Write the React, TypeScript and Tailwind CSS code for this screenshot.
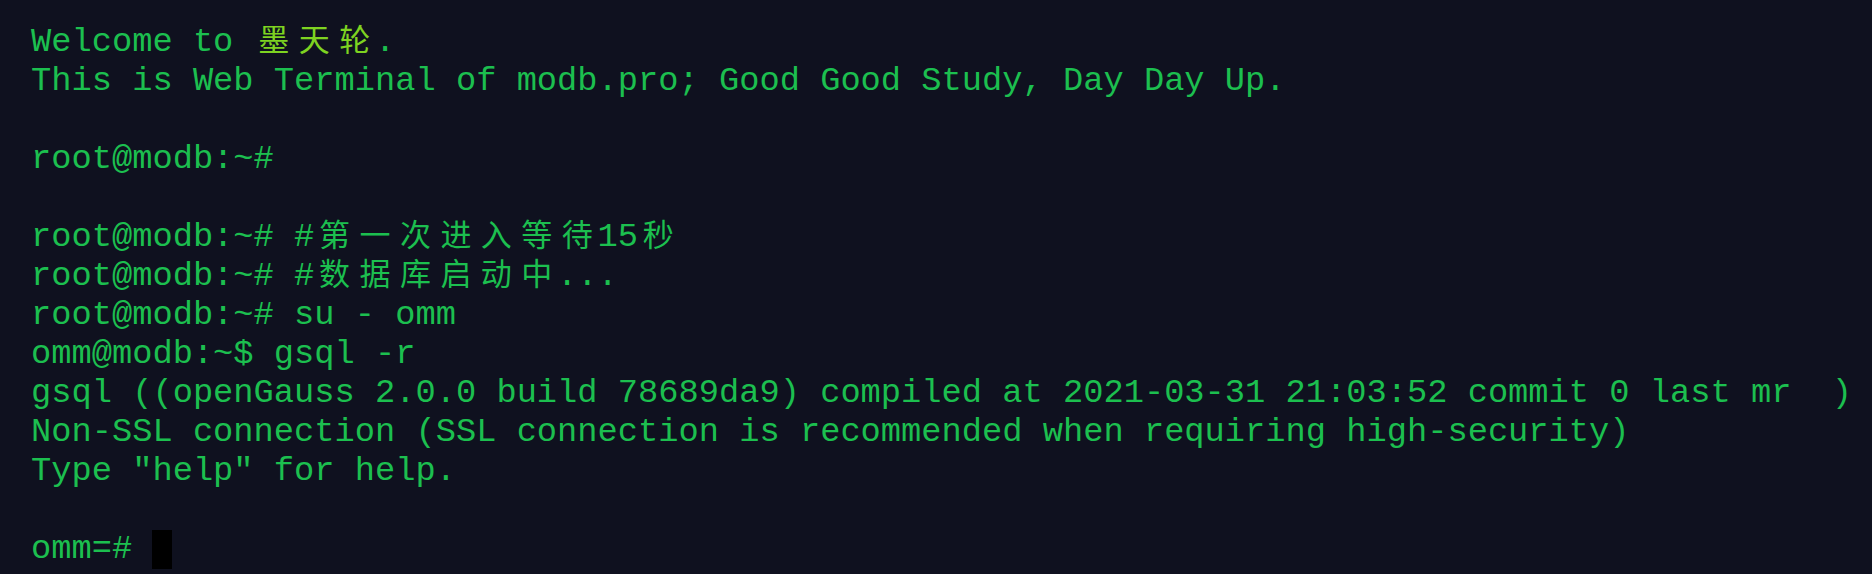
import React from "react";

type Seg = { text: string; lime?: boolean };

const rows: Seg[][] = [
  [{ text: "Welcome to " }, { text: "墨天轮", lime: true }, { text: "." }],
  [{ text: "This is Web Terminal of modb.pro; Good Good Study, Day Day Up." }],
  [],
  [{ text: "root@modb:~#" }],
  [],
  [{ text: "root@modb:~# #第一次进入等待15秒" }],
  [{ text: "root@modb:~# #数据库启动中..." }],
  [{ text: "root@modb:~# su - omm" }],
  [{ text: "omm@modb:~$ gsql -r" }],
  [
    {
      text: "gsql ((openGauss 2.0.0 build 78689da9) compiled at 2021-03-31 21:03:52 commit 0 last mr  )",
    },
  ],
  [{ text: "Non-SSL connection (SSL connection is recommended when requiring high-security)" }],
  [{ text: 'Type "help" for help.' }],
  [],
];

const isWide = (ch: string) => /[\u3000-\u9fff\uff00-\uffef]/.test(ch);

// xterm lays wide chars over two cells, so keep them two cells wide
const Cells: React.FC<{ seg: Seg }> = ({ seg }) => {
  const parts: { wide: boolean; s: string }[] = [];
  for (const ch of Array.from(seg.text)) {
    const wide = isWide(ch);
    const last = parts[parts.length - 1];
    if (last && !wide && !last.wide) last.s += ch;
    else parts.push({ wide, s: ch });
  }
  return (
    <span className={seg.lime ? "text-[#7ed321]" : "text-[#1cbf4f]"}>
      {parts.map((p, i) =>
        p.wide ? (
          <span
            key={i}
            className="inline-block w-[40.46px] text-center align-top text-[31px] leading-[29px] font-['Noto_Sans_CJK_SC',sans-serif]"
          >
            {p.s}
          </span>
        ) : (
          <span key={i}>{p.s}</span>
        )
      )}
    </span>
  );
};

export default function App() {
  return (
    <div className="w-[1872px] h-[574px] overflow-hidden bg-[#0f111f] pt-[23px] pl-[31px]">
      <div className="font-['Liberation_Mono','Courier_New',monospace] text-[33.72px] leading-[39px] whitespace-pre">
        {rows.map((row, i) => (
          <div key={i} className="h-[39px]">
            {row.map((seg, j) => (
              <Cells key={j} seg={seg} />
            ))}
          </div>
        ))}
        <div className="h-[39px] flex items-start">
          <span className="text-[#1cbf4f]">omm=# </span>
          <span className="inline-block w-[20px] h-[39px] bg-black" />
        </div>
      </div>
    </div>
  );
}
